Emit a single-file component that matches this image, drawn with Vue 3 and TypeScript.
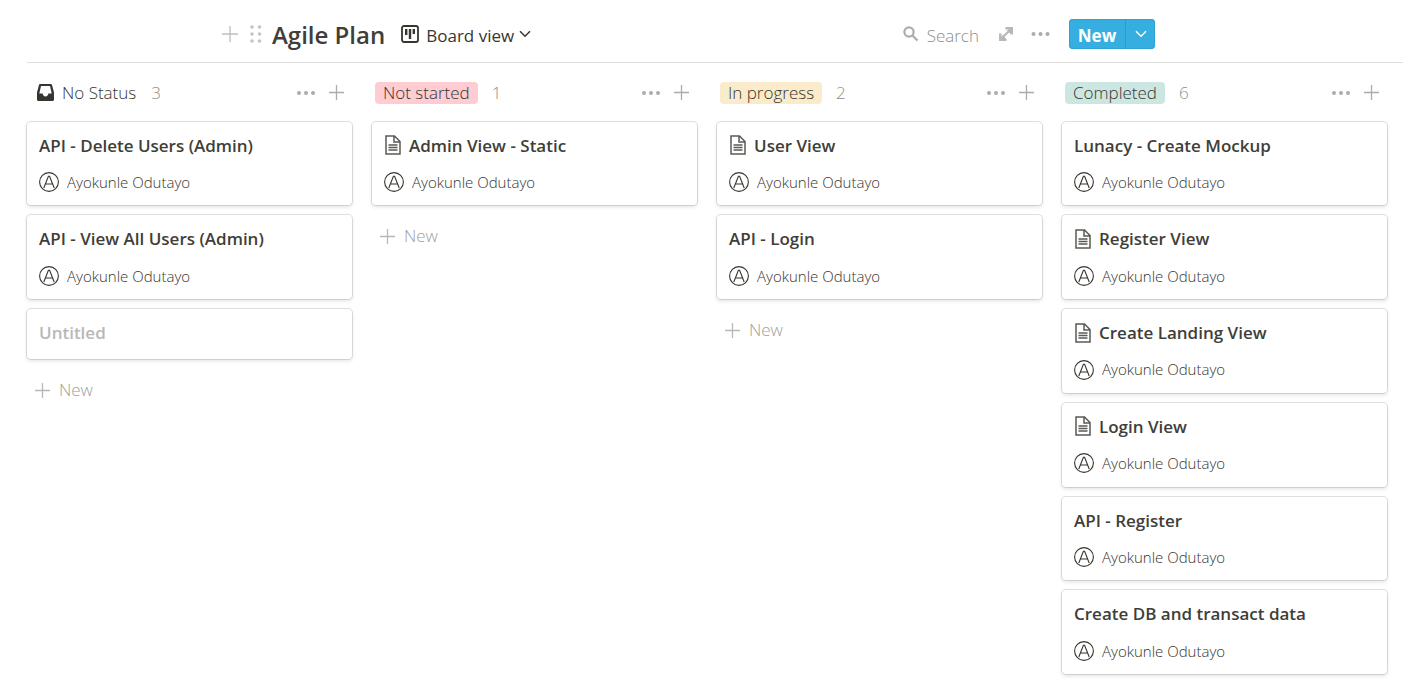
<script setup lang="ts">
interface Card {
  title: string
  person?: string
  page?: boolean
}

interface Column {
  name: string
  tone: 'none' | 'red' | 'yellow' | 'green'
  open: boolean
  cards: Card[]
}

const person = 'Ayokunle Odutayo'

const columns: Column[] = [
  {
    name: 'No Status',
    tone: 'none',
    open: true,
    cards: [
      { title: 'API - Delete Users (Admin)', person },
      { title: 'API - View All Users (Admin)', person },
      { title: '' },
    ],
  },
  {
    name: 'Not started',
    tone: 'red',
    open: true,
    cards: [{ title: 'Admin View - Static', person, page: true }],
  },
  {
    name: 'In progress',
    tone: 'yellow',
    open: true,
    cards: [
      { title: 'User View', person, page: true },
      { title: 'API - Login', person },
    ],
  },
  {
    name: 'Completed',
    tone: 'green',
    open: false,
    cards: [
      { title: 'Lunacy - Create Mockup', person },
      { title: 'Register View', person, page: true },
      { title: 'Create Landing View', person, page: true },
      { title: 'Login View', person, page: true },
      { title: 'API - Register', person },
      { title: 'Create DB and transact data', person },
    ],
  },
]
</script>

<template>
  <main class="page">
    <header class="bar">
      <div class="heading">
        <button class="icon-btn" type="button" aria-label="Add block">
          <svg class="add-block" viewBox="0 0 18 18"><path d="M9 1v16M1 9h16" /></svg>
        </button>
        <button class="icon-btn handle" type="button" aria-label="Drag block">
          <svg class="grip" viewBox="0 0 12 18">
            <circle cx="2" cy="2" r="1.8" /><circle cx="9.5" cy="2" r="1.8" />
            <circle cx="2" cy="9" r="1.8" /><circle cx="9.5" cy="9" r="1.8" />
            <circle cx="2" cy="16" r="1.8" /><circle cx="9.5" cy="16" r="1.8" />
          </svg>
        </button>
        <h1 class="title">Agile Plan</h1>
        <button class="view" type="button">
          <svg class="board-icon" viewBox="0 0 18 18">
            <rect x="1" y="1" width="16" height="16" rx="2" fill="none" stroke="currentColor" stroke-width="1.8" />
            <path d="M4 4h2.4v6H4zM7.8 4h2.4v10H7.8zM11.6 4H14v5h-2.4z" fill="currentColor" />
          </svg>
          <span class="caption">Board view</span>
          <svg class="chevron" viewBox="0 0 12 8"><path d="M1 1.2l5 5 5-5" /></svg>
        </button>
      </div>
      <div class="tools">
        <button class="search" type="button">
          <svg class="search-icon" viewBox="0 0 16 16">
            <circle cx="6" cy="6" r="4.6" /><path d="M9.5 9.5l5 5" />
          </svg>
          <span class="caption">Search</span>
        </button>
        <button class="icon-btn" type="button" aria-label="Open as full page">
          <svg class="expand" viewBox="0 0 14 14">
            <path d="M2 12L12 2" fill="none" stroke="currentColor" stroke-width="2.2" />
            <path d="M6.5 0H14v7.5h-2L6.5 2zM0 6.5h2L7.5 12v2H0z" fill="currentColor" />
            <path d="M8 2.200h1.500L8 3.700zM2.200 8v1.500L3.700 8z" fill="#fff" />
          </svg>
        </button>
        <button class="icon-btn" type="button" aria-label="View options">
          <svg class="dots wide" viewBox="0 0 18 4"><circle cx="2" cy="2" r="2" /><circle cx="9" cy="2" r="2" /><circle cx="16" cy="2" r="2" /></svg>
        </button>
        <div class="split">
          <button class="new-main" type="button"><span class="caption">New</span></button>
          <button class="new-menu" type="button" aria-label="New from template">
            <svg class="chevron" viewBox="0 0 12 8"><path d="M1 1.2l5 5 5-5" /></svg>
          </button>
        </div>
      </div>
    </header>

    <div class="board">
      <section v-for="column in columns" :key="column.name" class="column">
        <header class="column-head">
          <svg v-if="column.tone === 'none'" class="tray" viewBox="0 0 17 17">
            <path
              fill-rule="evenodd"
              d="M3.5 0h10c.9 0 1.4.5 1.6 1.2L17 8.500v7c0 .9-.6 1.500-1.500 1.500h-14C.6 17 0 16.400 0 15.500v-7l1.900-7.300C2.100.5 2.600 0 3.500 0zM4 2L2.300 9.500h3.400c0 1.700 1.200 2.900 2.800 2.900s2.800-1.200 2.800-2.900h3.400L13 2z"
            />
          </svg>
          <h2 class="label" :class="column.tone">{{ column.name }}</h2>
          <span class="count">{{ column.cards.length }}</span>
          <button class="icon-btn more" type="button" :aria-label="`${column.name} options`">
            <svg class="dots" viewBox="0 0 18 4"><circle cx="2" cy="2" r="2" /><circle cx="9" cy="2" r="2" /><circle cx="16" cy="2" r="2" /></svg>
          </button>
          <button class="icon-btn" type="button" :aria-label="`Add to ${column.name}`">
            <svg class="plus" viewBox="0 0 15 15"><path d="M7.5 0v15M0 7.5h15" /></svg>
          </button>
        </header>

        <div class="cards">
          <article v-for="(card, i) in column.cards" :key="i" class="card">
            <h3 class="card-title" :class="{ untitled: !card.title }">
              <svg v-if="card.page" class="doc" viewBox="0 0 16 20">
                <path d="M1 1h8.500L15 6.500V19H1z M9 1v6h6" fill="none" stroke="currentColor" stroke-width="1.5" />
                <path d="M3.500 10h9M3.500 12.500h9M3.500 15h9" stroke="currentColor" stroke-width="1.3" />
              </svg>
              {{ card.title || 'Untitled' }}
            </h3>
            <div v-if="card.person" class="person">
              <svg class="avatar" viewBox="0 0 20 20">
                <circle cx="10" cy="10" r="9.4" /><path d="M4.800 16L9.400 4.200h1.200L15.200 16M6.500 12h7" />
              </svg>
              {{ card.person }}
            </div>
          </article>
        </div>

        <button v-if="column.open" class="add" type="button">
          <svg class="plus" viewBox="0 0 15 15"><path d="M7.5 0v15M0 7.5h15" /></svg>
          New
        </button>
      </section>
    </div>
  </main>
</template>

<style>
body {
  margin: 0;
  background: #fff;
}
</style>

<style scoped>
.page {
  font-family: "Segoe UI", "Open Sans", "Noto Sans", sans-serif;
  font-weight: 300;
  color: #37352f;
}

h1,
h2,
h3 {
  margin: 0;
}

button {
  margin: 0;
  padding: 0;
  border: 0;
  background: none;
  color: inherit;
  font: inherit;
  cursor: pointer;
}

svg {
  display: block;
  flex: none;
}

.bar {
  display: flex;
  align-items: flex-start;
  justify-content: space-between;
  box-sizing: border-box;
  height: 63px;
  margin-left: 27px;
  padding: 0 248px 0 194px;
  border-bottom: 1px solid #dededd;
}

.heading,
.tools,
.view,
.search,
.icon-btn {
  display: flex;
  align-items: center;
}

.heading,
.tools {
  height: 68px;
}

.caption {
  display: block;
  padding-top: 2px;
}

.icon-btn {
  color: #adacaa;
}

.add-block,
.plus {
  fill: none;
  stroke: currentColor;
  stroke-width: 1.3;
}

.add-block {
  width: 18px;
  height: 18px;
  color: #bfbebc;
}

.handle {
  margin-left: 11px;
}

.grip {
  width: 12px;
  height: 18px;
  fill: #c5c4c2;
}

.title {
  margin-left: 10px;
  padding-top: 2px;
  color: #403e39;
  font-size: 24px;
  font-weight: 600;
  line-height: 32px;
  white-space: nowrap;
}

.view {
  margin-left: 16px;
  font-size: 17px;
  font-weight: 400;
  white-space: nowrap;
}

.view .chevron {
  margin-left: 5px;
}

.board-icon {
  width: 18px;
  height: 18px;
  margin-right: 7px;
}

.chevron {
  width: 12px;
  height: 8px;
  fill: none;
  stroke: currentColor;
  stroke-width: 1.5;
}

.search {
  margin-right: 20px;
  color: #8f8e8b;
  font-size: 17px;
}

.search-icon {
  width: 16px;
  height: 16px;
  margin-right: 8px;
  fill: none;
  stroke: #adacaa;
  stroke-width: 2.2;
}

.expand {
  width: 14px;
  height: 14px;
  color: #b9b8b6;
}

.dots {
  width: 18px;
  height: 4px;
  fill: currentColor;
}

.dots.wide {
  width: 19px;
  margin-left: 18px;
}

.split {
  display: flex;
  height: 30px;
  margin-left: 19px;
  border-radius: 4px;
  background: #37aee0;
  box-shadow: inset 0 0 0 1px #2fa3d4;
  color: #fff;
}

.new-main {
  width: 57px;
  border-right: 1px solid #2d9bca;
  font-size: 17px;
  font-weight: 700;
}

.new-menu {
  display: flex;
  align-items: center;
  justify-content: center;
  width: 29px;
}

.board {
  display: grid;
  grid-template-columns: repeat(4, minmax(0, 1fr));
  gap: 20px;
  padding: 0 16px 16px 27px;
}

.column-head {
  display: flex;
  align-items: center;
  padding: 17px 8px 16px 3px;
  font-size: 17px;
  line-height: 1.5;
}

.tray {
  width: 17px;
  height: 17px;
  margin-left: 7px;
  fill: currentColor;
}

.label {
  padding: 0 8px;
  border-radius: 4px;
  font-size: 17px;
  font-weight: 300;
  line-height: 22px;
  white-space: nowrap;
}

.red {
  background: #ffccd1;
}

.yellow {
  background: #faebca;
}

.green {
  background: #cce7e1;
}

.count {
  margin-left: 14px;
  color: #8f8e8b;
}

.none + .count {
  margin-left: 7px;
}

.more {
  margin: 0 14px 0 auto;
}

.plus {
  width: 15px;
  height: 15px;
}

.cards {
  display: grid;
  gap: 10px;
}

.card {
  padding: 13px 12px 12px;
  border-radius: 4px;
  background: #fff;
  box-shadow: 0 0 0 1px rgba(15, 15, 15, 0.12), 0 2px 4px rgba(15, 15, 15, 0.12);
}

.card-title {
  display: flex;
  align-items: center;
  color: #403e39;
  font-size: 17px;
  font-weight: 600;
  line-height: 1.25;
  white-space: nowrap;
}

.untitled {
  padding-bottom: 4px;
  color: #b9b8b6;
}

.doc {
  width: 16px;
  height: 20px;
  margin: 0 8px 0 1px;
  color: #5c5a55;
}

.person {
  display: flex;
  align-items: center;
  margin-top: 15px;
  font-size: 15px;
  line-height: 1.5;
  white-space: nowrap;
}

.avatar {
  width: 20px;
  height: 20px;
  margin-right: 8px;
  fill: none;
  stroke: currentColor;
  stroke-width: 1.1;
}

.add {
  display: flex;
  align-items: center;
  gap: 9px;
  margin: 19px 0 0 8px;
  color: #a1a09d;
  font-size: 17px;
  line-height: 24px;
}

.add .plus {
  color: #b9b8b6;
}
</style>
